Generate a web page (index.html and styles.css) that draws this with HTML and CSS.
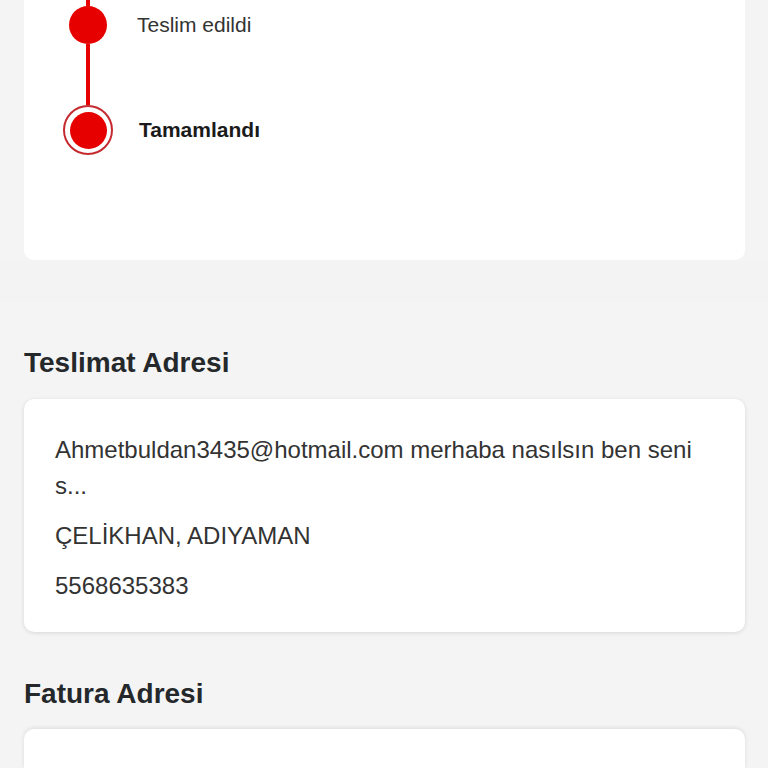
FILE: index.html
```html
<!DOCTYPE html>
<html lang="tr">
<head>
<meta charset="utf-8">
<link rel="stylesheet" href="styles.css">
</head>
<body>
<div class="page">
  <section class="card timeline">
    <div class="rail-top"></div>
    <div></div>
    <div class="dot"></div>
    <div class="step-label">Teslim edildi</div>
    <div class="rail"></div>
    <div></div>
    <div class="ring"><div class="ring-dot"></div></div>
    <div class="step-label current">Tamamlandı</div>
  </section>
  <div class="divider"></div>
  <h2 class="section-title">Teslimat Adresi</h2>
  <section class="card address">
    <p class="addr-line">Ahmetbuldan3435@hotmail.com merhaba nasılsın ben seni s...</p>
    <p class="addr-line">ÇELİKHAN, ADIYAMAN</p>
    <p class="addr-line">5568635383</p>
  </section>
  <h2 class="section-title billing">Fatura Adresi</h2>
  <section class="card address empty"></section>
</div>
</body>
</html>
```
FILE: styles.css
```css
html, body {
  margin: 0;
  padding: 0;
  background: #f4f4f4;
}
body {
  font-family: "Liberation Sans", Arial, sans-serif;
  color: #333333;
}
.page {
  display: flex;
  flex-direction: column;
  padding: 0 23px 0 24px;
}
.card {
  background: #ffffff;
  border-radius: 10px;
}
.timeline {
  border-radius: 0 0 10px 10px;
  display: grid;
  grid-template-columns: 50px 1fr;
  grid-template-rows: 6px 38px 61px 50px;
  column-gap: 24px;
  padding: 0 0 105px 39px;
  align-items: center;
}
.rail-top, .rail {
  width: 4px;
  height: 100%;
  background: #e60000;
  justify-self: center;
}
.dot {
  width: 38px;
  height: 38px;
  border-radius: 50%;
  background: #e60000;
  justify-self: center;
}
.ring {
  width: 50px;
  height: 50px;
  box-sizing: border-box;
  border-radius: 50%;
  border: 2px solid #c42a30;
  display: flex;
  align-items: center;
  justify-content: center;
}
.ring-dot {
  width: 37px;
  height: 37px;
  border-radius: 50%;
  background: #e60000;
}
.step-label {
  font-size: 21px;
  color: #333333;
}
.step-label.current {
  font-weight: bold;
  color: #1a1a1a;
  padding-left: 2px;
}
.divider {
  height: 40px;
  margin: 2px -23px 0 -24px;
  background: #f3f3f3;
}
.section-title {
  margin: 45px 0 20px 0;
  font-size: 28px;
  font-weight: bold;
  color: #25282b;
  line-height: 32px;
}
.section-title.billing {
  margin-top: 46px;
  margin-bottom: 19px;
}
.address {
  box-shadow: 0 1px 4px rgba(0, 0, 0, 0.12);
  padding: 33px 40px 28px 31px;
}
.addr-line {
  margin: 0 0 14px 0;
  font-size: 24px;
  line-height: 36px;
  color: #333333;
}
.addr-line:last-child {
  margin-bottom: 0;
}
.empty {
  height: 39px;
  padding: 0;
  border-radius: 10px 10px 0 0;
  box-shadow: 0 -1px 4px rgba(0, 0, 0, 0.10);
}
```
